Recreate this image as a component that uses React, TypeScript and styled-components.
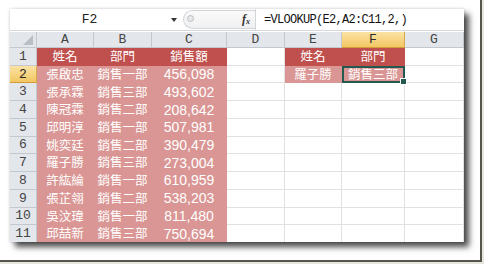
import React from "react";
import styled, { createGlobalStyle } from "styled-components";

const GlobalStyle = createGlobalStyle`
  html, body {
    margin: 0;
    padding: 0;
    background: #e6e6de;
  }
  body {
    width: 484px;
    height: 264px;
    overflow: hidden;
  }
`;

const Frame = styled.div`
  box-sizing: border-box;
  width: 482px;
  height: 262px;
  background: #fff;
  border-right: 2px solid #55554d;
  border-bottom: 2px solid #55554d;
  padding: 9px 0 0 10px;
`;

const Sheet = styled.div`
  width: 454px;
  height: 233px;
  background: #fff;
  display: flex;
  flex-direction: column;
  overflow: hidden;
  box-shadow: 5px 5px 6px rgba(0, 0, 0, 0.7), 0 0 3px rgba(0, 0, 0, 0.2);
`;

const FormulaBar = styled.div`
  height: 21px;
  flex: none;
  display: flex;
  align-items: stretch;
  background: #fff;
  border-bottom: 1px solid #d4d7dc;
`;

const NameBox = styled.div`
  width: 173px;
  display: flex;
  align-items: center;
  font-family: "Liberation Mono", monospace;
  font-size: 13px;
  color: #222;
`;

const NameText = styled.span`
  flex: 1;
  text-align: center;
  padding-right: 2px;
`;

const Arrow = styled.span`
  width: 0;
  height: 0;
  margin-right: 6px;
  border-left: 3px solid transparent;
  border-right: 3px solid transparent;
  border-top: 4px solid #333;
`;

const Buttons = styled.div`
  width: 72px;
  margin: 1px 0;
  box-sizing: border-box;
  display: flex;
  align-items: center;
  justify-content: space-between;
  padding: 0 5px 0 3px;
  border: 1px solid #d2d5d9;
  border-right: none;
  border-radius: 10px 0 0 10px;
  background: linear-gradient(#fafafa, #f0f0f0);
`;

const Knob = styled.span`
  width: 5px;
  height: 5px;
  margin-top: -3px;
  border-radius: 50%;
  border: 1px solid #b8bcc2;
  background: #e8e8e8;
`;

const Fx = styled.span`
  font-family: "Liberation Serif", serif;
  font-style: italic;
  font-weight: bold;
  font-size: 12px;
  color: #333;
  sub {
    font-size: 8px;
    vertical-align: -1px;
  }
`;

const FormulaInput = styled.div`
  flex: 1;
  display: flex;
  align-items: center;
  padding-left: 8px;
  border-left: 1px solid #d2d5d9;
  font-family: "Liberation Mono", monospace;
  font-size: 12px;
  letter-spacing: -0.7px;
  color: #111;
`;

const Grid = styled.div`
  margin-top: 1px;
  height: 211px;
  flex: none;
  display: grid;
  grid-template-columns: 27px 57px 58px 75px 58px 57px 63px 59px;
  grid-template-rows: 16px repeat(11, minmax(0, 1fr));
`;

const Head = styled.div<{ $active?: boolean }>`
  box-sizing: border-box;
  min-height: 0;
  display: flex;
  align-items: center;
  justify-content: center;
  line-height: 1;
  font-family: "Liberation Mono", monospace;
  font-size: 13px;
  color: ${({ $active }) => ($active ? "#2a2a2a" : "#444")};
  background: ${({ $active }) =>
    $active ? "linear-gradient(#fbe2a4, #f3c762)" : "#e3e6eb"};
  border-right: 1px solid ${({ $active }) => ($active ? "#d6a94a" : "#c3c8cf")};
  border-bottom: 1px solid ${({ $active }) => ($active ? "#d29d38" : "#c3c8cf")};
`;

const Corner = styled(Head)`
  position: relative;
  &::after {
    content: "";
    position: absolute;
    right: 3px;
    bottom: 2px;
    border-left: 10px solid transparent;
    border-bottom: 10px solid #b9bec6;
  }
`;

type Fill = "head" | "data" | "none";

const fills: Record<Fill, string> = {
  head: "#c0504d",
  data: "#da9694",
  none: "#fff",
};

const Cell = styled.div<{ $fill: Fill; $num?: boolean; $selected?: boolean }>`
  position: relative;
  box-sizing: border-box;
  min-height: 0;
  display: flex;
  align-items: center;
  justify-content: center;
  line-height: 1;
  background: ${({ $fill }) => fills[$fill]};
  border-right: 1px solid
    ${({ $fill }) => ($fill === "none" ? "#e1e1e1" : fills[$fill])};
  border-bottom: 1px solid
    ${({ $fill }) => ($fill === "none" ? "#e1e1e1" : fills[$fill])};
  color: #fff;
  font-family: ${({ $num }) =>
    $num
      ? `"Liberation Sans", sans-serif`
      : `"Noto Sans CJK TC", sans-serif`};
  font-size: ${({ $num }) => ($num ? "14px" : "12.5px")};
  white-space: nowrap;
  ${({ $selected }) =>
    $selected &&
    `
    outline: 2px solid #24594f;
    outline-offset: -2px;
    z-index: 1;
    &::after {
      content: "";
      position: absolute;
      right: -3px;
      bottom: -3px;
      width: 5px;
      height: 5px;
      background: #24594f;
      border: 1px solid #fff;
    }
  `}
`;

const columns = ["A", "B", "C", "D", "E", "F", "G"];

const rows: [string, string, string][] = [
  ["張啟忠", "銷售一部", "456,098"],
  ["張承霖", "銷售三部", "493,602"],
  ["陳冠霖", "銷售二部", "208,642"],
  ["邱明淳", "銷售一部", "507,981"],
  ["姚奕廷", "銷售二部", "390,479"],
  ["羅子勝", "銷售三部", "273,004"],
  ["許紘綸", "銷售一部", "610,959"],
  ["張芷翎", "銷售二部", "538,203"],
  ["吳汶瑋", "銷售一部", "811,480"],
  ["邱喆新", "銷售三部", "750,694"],
];

const lookup: Record<number, [string, string]> = {
  1: ["姓名", "部門"],
  2: ["羅子勝", "銷售三部"],
};

export default function App() {
  const table = [["姓名", "部門", "銷售額"], ...rows];

  return (
    <>
      <GlobalStyle />
      <Frame>
        <Sheet>
          <FormulaBar>
            <NameBox>
              <NameText>F2</NameText>
              <Arrow />
            </NameBox>
            <Buttons>
              <Knob />
              <Fx>
                f<sub>x</sub>
              </Fx>
            </Buttons>
            <FormulaInput>=VLOOKUP(E2,A2:C11,2,)</FormulaInput>
          </FormulaBar>
          <Grid>
            <Corner />
            {columns.map((c) => (
              <Head key={c} $active={c === "F"}>
                {c}
              </Head>
            ))}
            {table.map((r, i) => {
              const n = i + 1;
              const fill: Fill = n === 1 ? "head" : "data";
              const side = lookup[n];
              return (
                <React.Fragment key={n}>
                  <Head $active={n === 2}>{n}</Head>
                  <Cell $fill={fill}>{r[0]}</Cell>
                  <Cell $fill={fill}>{r[1]}</Cell>
                  <Cell $fill={fill} $num={n > 1}>
                    {r[2]}
                  </Cell>
                  <Cell $fill="none" />
                  <Cell $fill={side ? fill : "none"}>{side?.[0]}</Cell>
                  <Cell $fill={side ? fill : "none"} $selected={n === 2}>
                    {side?.[1]}
                  </Cell>
                  <Cell $fill="none" />
                </React.Fragment>
              );
            })}
          </Grid>
        </Sheet>
      </Frame>
    </>
  );
}
